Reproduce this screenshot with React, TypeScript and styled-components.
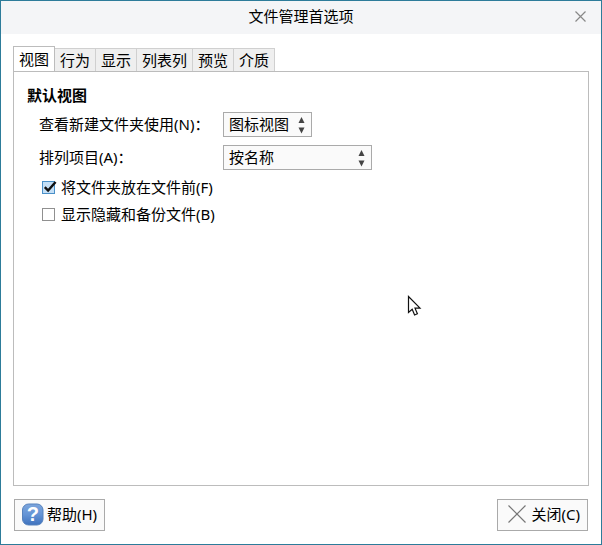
import React, { useState } from "react";
import styled, { createGlobalStyle, css } from "styled-components";

const GlobalStyle = createGlobalStyle`
  *, *::before, *::after { box-sizing: border-box; }
  body {
    margin: 0;
    background: #fff;
    color: #000;
    font: 15px/22px "Noto Sans", "Noto Sans CJK SC", sans-serif;
  }
  button, select, input { font: inherit; color: inherit; margin: 0; }
`;

const Dialog = styled.main`
  min-height: 100vh;
  display: flex;
  flex-direction: column;
  border: 1px solid #2d7c9a;
  background: #fff;
`;

const TitleBar = styled.header`
  display: grid;
  grid-template-columns: 40px 1fr 40px;
  align-items: center;
  height: 33px;
  background: #f4f5f7;
`;

const Title = styled.h1`
  grid-column: 2;
  margin: 0;
  padding-bottom: 3px;
  font-size: 15px;
  font-weight: 400;
  text-align: center;
`;

const TitleClose = styled.button`
  display: flex;
  align-items: center;
  justify-content: center;
  height: 33px;
  padding: 0 2px 2px 0;
  border: 0;
  background: none;
`;

const Content = styled.div`
  flex: 1;
  display: flex;
  flex-direction: column;
  padding: 12px 12px 0;
`;

const TabList = styled.div`
  display: flex;
  align-items: flex-end;
  margin-bottom: -1px;
`;

const Tab = styled.button<{ $active: boolean }>`
  height: 24px;
  padding: 0 5px;
  border: 1px solid #d0d0d0;
  border-left-width: 0;
  border-bottom-color: #bcbcbc;
  background: #efefef;
  line-height: 22px;
  ${({ $active }) =>
    $active &&
    css`
      height: 26px;
      border-left-width: 1px;
      border-color: #bcbcbc;
      border-bottom-color: #fff;
      background: #fff;
    `}
`;

const Panel = styled.section`
  flex: 1;
  padding: 12px 13px;
  border: 1px solid #bcbcbc;
`;

const GroupTitle = styled.h2`
  margin: 0 0 6px;
  font-size: 15px;
  line-height: 22px;
  font-weight: 700;
`;

const Fields = styled.div`
  display: grid;
  grid-template-columns: 184px auto;
  justify-content: start;
  align-items: center;
  row-gap: 8px;
  padding-left: 12px;
`;

const FieldLabel = styled.label`
  padding-bottom: 2px;
`;

const SelectBox = styled.div<{ $wide?: boolean }>`
  display: grid;
  align-items: center;
  width: ${({ $wide }) => ($wide ? 149 : 89)}px;
  & > * {
    grid-area: 1 / 1;
  }
  & > svg {
    justify-self: end;
    margin-right: 6px;
    pointer-events: none;
  }
`;

const Select = styled.select`
  appearance: none;
  width: 100%;
  height: 25px;
  padding: 0 20px 2px 5px;
  border: 1px solid #aaa;
  border-radius: 0;
  background: #fafafa;
  line-height: 22px;
`;

const Checks = styled.div`
  display: grid;
  justify-items: start;
  row-gap: 5px;
  padding: 6px 0 0 15px;
`;

const CheckLabel = styled.label`
  display: flex;
  align-items: center;
  gap: 4px;
`;

const CheckBox = styled.span`
  display: grid;
  width: 15px;
  height: 15px;
  & > * {
    grid-area: 1 / 1;
  }
  & > svg {
    pointer-events: none;
  }
`;

const CheckInput = styled.input`
  appearance: none;
  width: 13px;
  height: 13px;
  margin: 1px 0 0;
  border: 1px solid #909090;
  background: #fff;
  &:checked {
    border-color: #4a90c8;
    background: #c4dff6;
  }
`;

const Footer = styled.footer`
  display: flex;
  justify-content: space-between;
  padding: 13px 13px;
`;

const ActionButton = styled.button<{ $primary?: boolean }>`
  display: flex;
  align-items: center;
  gap: ${({ $primary }) => ($primary ? 6 : 3)}px;
  height: 32px;
  padding: ${({ $primary }) => ($primary ? "0 7px 2px 10px" : "0 7px 2px")};
  border: 1px solid #aaa;
  background: #fafafa;
`;

const Pointer = styled.svg`
  position: absolute;
  left: 407px;
  top: 295px;
  pointer-events: none;
`;

const Arrows = () => (
  <svg width="9" height="19" viewBox="0 0 9 19" fill="#444" aria-hidden="true">
    <path d="M4.5 2 7.5 8H1.5Z" />
    <path d="M4.5 18.5 1.5 12.5H7.5Z" />
  </svg>
);

const Cross = ({ size, color }: { size: number; color: string }) => (
  <svg width={size} height={size} viewBox={`0 0 ${size} ${size}`} aria-hidden="true">
    <path d={`M.5.5 ${size - 0.5} ${size - 0.5}M${size - 0.5}.5.5 ${size - 0.5}`} stroke={color} strokeWidth="1.2" fill="none" />
  </svg>
);

const HelpIcon = () => (
  <svg width="22" height="24" viewBox="0 -1 22 24" aria-hidden="true">
    <defs>
      <linearGradient id="helpFill" x1="0" y1="0" x2="0" y2="1">
        <stop offset="0" stopColor="#7ea6dc" />
        <stop offset=".5" stopColor="#6494d6" />
        <stop offset="1" stopColor="#3f72bd" />
      </linearGradient>
    </defs>
    <rect x=".5" y="1" width="20.5" height="21" rx="6" fill="url(#helpFill)" stroke="#5682bd" />
    <text x="10.8" y="18" textAnchor="middle" fontFamily="Liberation Sans, sans-serif" fontWeight="700" fontSize="20" fill="#fff">?</text>
  </svg>
);

const Tick = () => (
  <svg width="15" height="15" viewBox="0 0 15 15" aria-hidden="true">
    <path d="M2.8 7.2 6.1 10.6 13.6 2" fill="none" stroke="#111" strokeWidth="2.4" />
  </svg>
);

const tabs = ["视图", "行为", "显示", "列表列", "预览", "介质"];

function CheckRow({ label, initial }: { label: string; initial: boolean }) {
  const [checked, setChecked] = useState(initial);
  return (
    <CheckLabel>
      <CheckBox>
        <CheckInput type="checkbox" checked={checked} onChange={(e) => setChecked(e.target.checked)} />
        {checked && <Tick />}
      </CheckBox>
      {label}
    </CheckLabel>
  );
}

export default function App() {
  const [active, setActive] = useState(0);
  return (
    <>
      <GlobalStyle />
      <Dialog>
        <TitleBar>
          <Title>文件管理首选项</Title>
          <TitleClose type="button" aria-label="关闭">
            <Cross size={11} color="#888" />
          </TitleClose>
        </TitleBar>
        <Content>
          <TabList role="tablist">
            {tabs.map((name, i) => (
              <Tab key={name} type="button" role="tab" aria-selected={i === active} $active={i === active} onClick={() => setActive(i)}>
                {name}
              </Tab>
            ))}
          </TabList>
          <Panel role="tabpanel">
            <GroupTitle>默认视图</GroupTitle>
            <Fields>
              <FieldLabel htmlFor="viewer">查看新建文件夹使用(N)：</FieldLabel>
              <SelectBox>
                <Select id="viewer" defaultValue="图标视图">
                  <option>图标视图</option>
                </Select>
                <Arrows />
              </SelectBox>
              <FieldLabel htmlFor="order">排列项目(A)：</FieldLabel>
              <SelectBox $wide>
                <Select id="order" defaultValue="按名称">
                  <option>按名称</option>
                </Select>
                <Arrows />
              </SelectBox>
            </Fields>
            <Checks>
              <CheckRow label="将文件夹放在文件前(F)" initial />
              <CheckRow label="显示隐藏和备份文件(B)" initial={false} />
            </Checks>
          </Panel>
        </Content>
        <Footer>
          <ActionButton type="button">
            <HelpIcon />
            帮助(H)
          </ActionButton>
          <ActionButton type="button" $primary>
            <Cross size={18} color="#777" />
            关闭(C)
          </ActionButton>
        </Footer>
      </Dialog>
      <Pointer width="15" height="22" viewBox="0 0 15 22" aria-hidden="true">
        <path d="M1.5 1.5V17.5L5.2 14.2 7.6 20 10.4 18.8 8 13.2H13Z" fill="#fff" stroke="#111" strokeWidth="1.2" />
      </Pointer>
    </>
  );
}
